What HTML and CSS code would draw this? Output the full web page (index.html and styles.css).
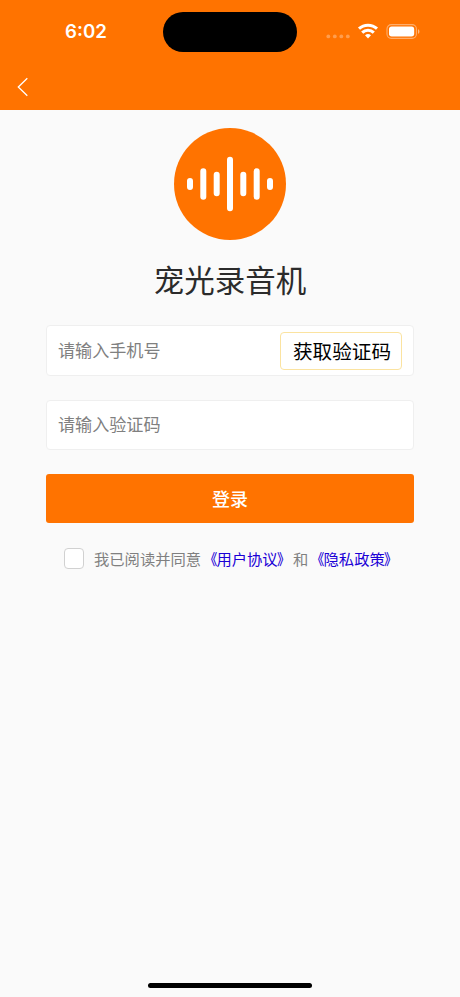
FILE: index.html
```html
<!DOCTYPE html>
<html lang="zh-CN">
<head>
<meta charset="utf-8">
<meta name="viewport" content="width=device-width, initial-scale=1">
<title>宠光录音机</title>
<link rel="stylesheet" href="styles.css">
</head>
<body>
<div class="screen">
  <header class="header">
    <div class="status">
      <span class="time">6:02</span>
      <span class="island"></span>
      <svg class="indicators" width="96" height="20" viewBox="0 0 96 20" fill="none">
        <g fill="#fff" fill-opacity=".3">
          <circle cx="4.3" cy="14.4" r="1.9"/><circle cx="10.8" cy="14.4" r="1.9"/><circle cx="17.3" cy="14.4" r="1.9"/><circle cx="23.8" cy="14.4" r="1.9"/>
        </g>
        <g stroke="#fff" stroke-width="3">
          <path d="M35 6.700a13.200 13.200 0 0 1 18 0"/>
          <path d="M38.200 10.600a8.300 8.300 0 0 1 11.600 0"/>
        </g>
        <path d="M41 13.300a4.600 4.600 0 0 1 6 0L44 16.500z" fill="#fff"/>
        <rect x="63" y="2.600" width="29.400" height="13.800" rx="4.300" stroke="#fff" stroke-opacity=".42" stroke-width="1.100"/>
        <rect x="65" y="4.500" width="25.200" height="10" rx="2.700" fill="#fff"/>
        <path d="M94 7.200v4.600c1.900-.7 1.900-3.900 0-4.600z" fill="#fff" fill-opacity=".5"/>
      </svg>
    </div>
    <nav class="nav">
      <svg width="12" height="20" viewBox="0 0 12 20" fill="none" stroke="#fff" stroke-width="1.3"><path d="M10.300 1.200 1.300 10l9 8.800"/></svg>
    </nav>
  </header>
  <main class="content">
    <svg class="logo" width="112" height="112" viewBox="0 0 112 112">
      <circle cx="56" cy="56" r="56" fill="#ff7300"/>
      <g stroke="#fff" stroke-width="6" stroke-linecap="round">
        <path d="M16 53v6M29.300 43.300v25.400M42.700 46.700v18.600M56 31.700v48.600M69.300 46.700v18.600M82.700 43.300v25.400M96 53v6"/>
      </g>
    </svg>
    <h1 class="title">宠光录音机</h1>
    <form class="form">
      <div class="field field-phone">
        <input class="input" type="tel" placeholder="请输入手机号">
        <button class="code" type="button">获取验证码</button>
      </div>
      <div class="field field-code">
        <input class="input" type="text" placeholder="请输入验证码">
      </div>
      <button class="login" type="button">登录</button>
      <div class="agree">
        <input class="check" type="checkbox" aria-label="同意">
        <p class="terms">我已阅读并同意<a href="#"><span class="open">《</span>用户协议<span class="close">》</span></a>和<a href="#"><span class="open">《</span>隐私政策<span class="close">》</span></a></p>
      </div>
    </form>
  </main>
  <footer class="home"><span class="home-bar"></span></footer>
</div>
</body>
</html>
```
FILE: styles.css
```css
* { box-sizing: border-box; }

body {
  margin: 0;
  background: #fafafa;
  font-family: "Noto Sans CJK SC", sans-serif;
}

.screen {
  height: 997px;
  display: flex;
  flex-direction: column;
  overflow: hidden;
}

.header {
  height: 110px;
  flex: none;
  background: #ff7300;
}

.status {
  height: 64px;
  display: grid;
  grid-template-columns: 163px 134px 163px;
  align-items: center;
}

.time {
  padding-left: 65px;
  color: #fff;
  font: 600 18.7px/24px Inter, sans-serif;
}

.island {
  height: 40px;
  border-radius: 20px;
  background: #000;
}

.indicators { margin: 0 0 1px 27px; }

.nav {
  height: 46px;
  padding-left: 17px;
  display: flex;
  align-items: center;
}

.content {
  flex: 1;
  padding: 18px 46px 0;
  display: flex;
  flex-direction: column;
  align-items: center;
}

.logo { flex: none; }

.title {
  margin: 16px 0 0;
  color: #2b2b2b;
  font-size: 30.5px;
  font-weight: 400;
  line-height: 46px;
}

.form { width: 368px; margin-top: 23px; }

.field {
  display: flex;
  align-items: center;
  padding: 0 11px;
  border: 1px solid #efefef;
  border-radius: 4px;
  background: #fff;
}

.field-phone { height: 51px; }

.field-code { height: 50px; margin-top: 24px; }

.input {
  flex: 1;
  min-width: 0;
  padding: 0 0 2px;
  border: 0;
  outline: 0;
  background: transparent;
  font: 17.1px/26px "Noto Sans CJK SC", sans-serif;
}

.input::placeholder { color: #808080; opacity: 1; }

.code {
  width: 122px;
  height: 38px;
  padding: 0 0 0 2px;
  border: 1px solid #fbe3a0;
  border-radius: 4px;
  background: #fff;
  color: #000;
  font: 19.6px/30px "Noto Sans CJK SC", sans-serif;
}

.login {
  display: block;
  width: 100%;
  height: 49px;
  margin-top: 24px;
  padding: 0 0 2px;
  border: 0;
  border-radius: 3px;
  background: #ff7300;
  color: #fff;
  font: 500 18px/28px "Noto Sans CJK SC", sans-serif;
}

.agree {
  display: flex;
  align-items: center;
  margin-top: 24px;
  padding-left: 18px;
}

.check {
  appearance: none;
  flex: none;
  width: 20px;
  height: 21px;
  margin: 0 10px 0 0;
  border: 1px solid #d1d1d1;
  border-radius: 4px;
  background: #fff;
}

.terms {
  margin: 0;
  color: #808080;
  font-size: 15.3px;
  line-height: 22px;
  white-space: nowrap;
}

.terms a { color: #1a00d6; text-decoration: none; }

.open, .close { display: inline-block; font-weight: 500; }

.open { transform: translateX(1px) scaleX(.85); transform-origin: right; }

.close { transform: translateX(-1px) scaleX(.85); transform-origin: left; }

.home {
  height: 15px;
  flex: none;
  display: flex;
  justify-content: center;
}

.home-bar {
  width: 164px;
  height: 5px;
  margin-top: 1px;
  border-radius: 3px;
  background: #000;
}
```
